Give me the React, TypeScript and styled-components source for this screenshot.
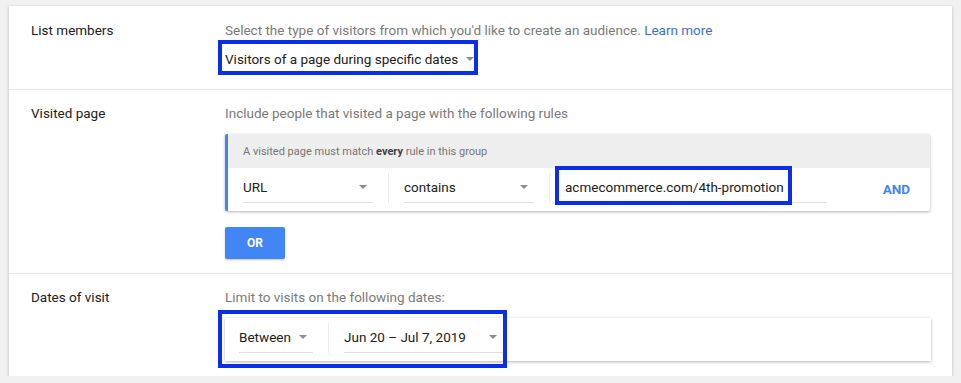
import styled, { createGlobalStyle } from 'styled-components';

const GlobalStyle = createGlobalStyle`
    body{
        margin: 0;
        background: #f1f1f1;
        font-family: Roboto, 'Liberation Sans', Arial, sans-serif;
        -webkit-font-smoothing: antialiased;
    }
`

const Card = styled.div`
    margin: 6px 9px 0 9px;
    width: 943px;
    background: #fff;
    box-shadow: 0 1px 3px rgba(0,0,0,0.25);
`

const Section = styled.section<{$top:number; $bottom:number}>`
    display: grid;
    grid-template-columns: 194px 1fr;
    padding: ${p=>p.$top}px 21px ${p=>p.$bottom}px 22px;
    border-top: 1px solid #e6e6e6;

    &:first-child{
        border-top: none;
    }
`

const Label = styled.div`
    font-size: 13.5px;
    line-height: 20px;
    color: #212121;
`

const Content = styled.div`
    display: flex;
    flex-direction: column;
    align-items: flex-start;
`

const Description = styled.div`
    font-size: 13.5px;
    line-height: 20px;
    color: #7a7a7a;

    a{
        color: #3b6fd4;
        text-decoration: none;
    }
`

const Highlight = styled.span<{$top:number; $left:number; $width:number; $height:number}>`
    position: absolute;
    top: ${p=>p.$top}px;
    left: ${p=>p.$left}px;
    width: ${p=>p.$width}px;
    height: ${p=>p.$height}px;
    border: 4px solid #0b2ee8;
    box-sizing: border-box;
    pointer-events: none;
`

const Arrow = styled.span`
    width: 0;
    height: 0;
    border-left: 4px solid transparent;
    border-right: 4px solid transparent;
    border-top: 4px solid #8c8c8c;
    flex-shrink: 0;
`

const Dropdown = styled.div<{$width?:number; $underline?:boolean}>`
    position: relative;
    display: flex;
    align-items: center;
    justify-content: space-between;
    gap: 8px;
    box-sizing: border-box;
    width: ${p=>p.$width ? `${p.$width}px` : 'auto'};
    padding-right: 6px;
    font-size: 13.5px;
    color: #212121;
    border-bottom: ${p=>p.$underline ? '1px solid #e0e0e0' : 'none'};
`

const TypeSelect = styled(Dropdown)`
    margin-top: 5px;
    height: 28px;
`

const RulePanel = styled.div`
    margin-top: 11px;
    width: 702px;
    border-left: 3px solid #4285f4;
    border-radius: 2px;
    box-shadow: 0 1px 3px rgba(0,0,0,0.3);
    background: #fff;
`

const RuleHeader = styled.div`
    height: 34px;
    display: flex;
    align-items: center;
    padding-left: 15px;
    background: #eeeeee;
    font-size: 11px;
    color: #757575;

    b{
        color: #424242;
    }
`

const Row = styled.div<{$pad:number; $height:number}>`
    display: flex;
    align-items: stretch;
    height: ${p=>p.$height}px;
    box-sizing: border-box;
    padding: 3px 0 8px ${p=>p.$pad}px;
`

const Separator = styled.div`
    width: 1px;
    margin: 2px 15px 0 15px;
    background: #ececec;
`

const UrlInput = styled.div`
    position: relative;
    width: 262px;
    display: flex;
    align-items: center;
    font-size: 13.5px;
    color: #212121;
    border-bottom: 1px solid #e0e0e0;
`

const AndButton = styled.div`
    margin-left: auto;
    padding-right: 20px;
    align-self: center;
    margin-top: 4px;
    font-size: 13.5px;
    font-weight: 700;
    color: #4285f4;
`

const OrButton = styled.div`
    margin-top: 16px;
    width: 60px;
    height: 32px;
    display: flex;
    align-items: center;
    justify-content: center;
    background: #4285f4;
    color: #fff;
    font-size: 12px;
    font-weight: 700;
    border-radius: 2px;
    box-shadow: 0 1px 2px rgba(0,0,0,0.25);
`

const DatePanel = styled.div`
    position: relative;
    margin-top: 11px;
    width: 706px;
    height: 43px;
    box-shadow: 0 1px 3px rgba(0,0,0,0.3);
    background: #fff;
`

export default function App(){
    return(
        <>
            <GlobalStyle />
            <Card>
                <Section $top={14} $bottom={16}>
                    <Label>List members</Label>
                    <Content>
                        <Description>
                            Select the type of visitors from which you'd like to create an audience. <a href="#">Learn more</a>
                        </Description>
                        <TypeSelect>
                            Visitors of a page during specific dates
                            <Arrow />
                            <Highlight $top={-5} $left={-7} $width={260} $height={35} />
                        </TypeSelect>
                    </Content>
                </Section>

                <Section $top={13} $bottom={14}>
                    <Label>Visited page</Label>
                    <Content>
                        <Description>Include people that visited a page with the following rules</Description>
                        <RulePanel>
                            <RuleHeader>A visited page must match&nbsp;<b>every</b>&nbsp;rule in this group</RuleHeader>
                            <Row $pad={15} $height={43}>
                                <Dropdown $width={130} $underline>URL<Arrow /></Dropdown>
                                <Separator />
                                <Dropdown $width={130} $underline>contains<Arrow /></Dropdown>
                                <Separator />
                                <UrlInput>
                                    acmecommerce.com/4th-promotion
                                    <Highlight $top={-5} $left={-10} $width={237} $height={39} />
                                </UrlInput>
                                <AndButton>AND</AndButton>
                            </Row>
                        </RulePanel>
                        <OrButton>OR</OrButton>
                    </Content>
                </Section>

                <Section $top={13} $bottom={15}>
                    <Label>Dates of visit</Label>
                    <Content>
                        <Description>Limit to visits on the following dates:</Description>
                        <DatePanel>
                            <Row $pad={14} $height={43}>
                                <Dropdown $width={74} $underline>Between<Arrow /></Dropdown>
                                <Separator />
                                <Dropdown $width={159} $underline>Jun 20 – Jul 7, 2019<Arrow /></Dropdown>
                            </Row>
                            <Highlight $top={-8} $left={-7} $width={289} $height={58} />
                        </DatePanel>
                    </Content>
                </Section>
            </Card>
        </>
    )
}
